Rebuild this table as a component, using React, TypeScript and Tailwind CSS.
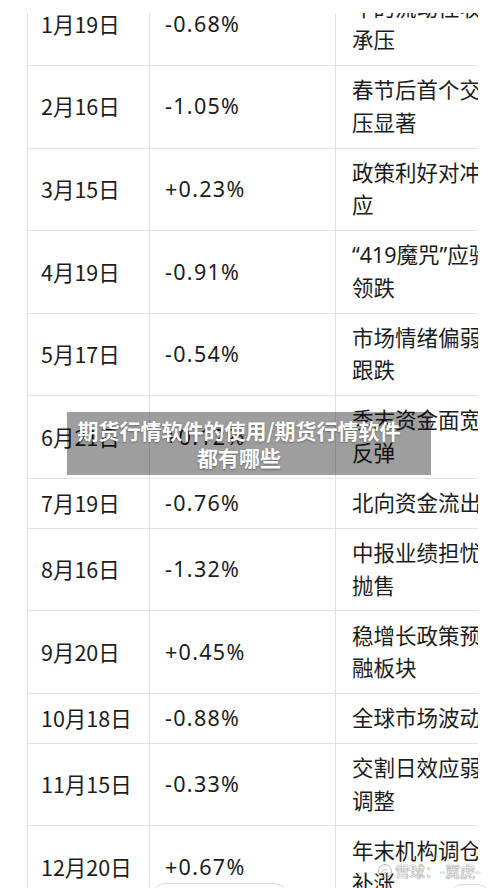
import React from "react";

type Row = { date: string; pct: string; lines: string[] };

const rows: Row[] = [
  { date: "1月19日", pct: "-0.68%", lines: ["年的流动性收紧", "承压"] },
  { date: "2月16日", pct: "-1.05%", lines: ["春节后首个交易日抛", "压显著"] },
  { date: "3月15日", pct: "+0.23%", lines: ["政策利好对冲外部效", "应"] },
  { date: "4月19日", pct: "-0.91%", lines: ["“419魔咒”应验，券商", "领跌"] },
  { date: "5月17日", pct: "-0.54%", lines: ["市场情绪偏弱，消费股", "跟跌"] },
  { date: "6月21日", pct: "+0.12%", lines: ["季末资金面宽松，超跌", "反弹"] },
  { date: "7月19日", pct: "-0.76%", lines: ["北向资金流出"] },
  { date: "8月16日", pct: "-1.32%", lines: ["中报业绩担忧引发", "抛售"] },
  { date: "9月20日", pct: "+0.45%", lines: ["稳增长政策预期提振金", "融板块"] },
  { date: "10月18日", pct: "-0.88%", lines: ["全球市场波动"] },
  { date: "11月15日", pct: "-0.33%", lines: ["交割日效应弱势", "调整"] },
  { date: "12月20日", pct: "+0.67%", lines: ["年末机构调仓，权重", "补涨"] },
];

export default function App() {
  return (
    <div className="relative w-[500px] h-[888px] overflow-hidden bg-white text-[#1c1c1c] font-['Noto_Sans_CJK_SC',sans-serif]">
      <div className="pt-[13px] pl-[27px]">
        <div className="w-[451px] h-[875px] overflow-hidden">
          <div className="-mt-[29.6px] w-[640px] border-l border-[#e2e2e2]">
            {rows.map((r) => (
              <div
                key={r.date}
                className="grid grid-cols-[122px_186px_1fr] border-b border-[#e2e2e2]"
              >
                <div className="flex items-center border-r border-[#e2e2e2] pl-[13px] py-[8.2px] text-[21.5px] leading-[32.6px] whitespace-nowrap">
                  {r.date}
                </div>
                <div className="flex items-center border-r border-[#e2e2e2] pl-[15px] py-[8.2px] text-[21.5px] leading-[32.6px] tracking-[1.3px] whitespace-nowrap font-['Noto_Sans','Noto_Sans_CJK_SC',sans-serif]">
                  {r.pct}
                </div>
                <div className="flex flex-col justify-center pl-[16px] py-[8.2px] text-[21.5px] leading-[32.6px] whitespace-nowrap font-['Noto_Sans','Noto_Sans_CJK_SC',sans-serif]">
                  {r.lines.map((l, i) => (
                    <div key={i}>{l}</div>
                  ))}
                </div>
              </div>
            ))}
          </div>
        </div>
      </div>

      {/* overlay title banner */}
      <div className="absolute left-[67px] top-[412px] w-[364px] h-[63px] bg-[rgba(0,0,0,0.38)] flex items-center justify-center pr-[20px]">
        <div className="text-center text-white font-bold text-[21px] leading-[27px] [text-shadow:0_1px_2px_rgba(0,0,0,0.35)] whitespace-nowrap">
          期货行情软件的使用/期货行情软件
          <br />
          都有哪些
        </div>
      </div>

      {/* watermark */}
      <div className="absolute left-[377px] top-[862px] flex items-center gap-[2px] text-[15px] leading-[18px] text-[#eeeeee] [text-shadow:0_0_1px_rgba(0,0,0,0.5),0_0_1px_rgba(0,0,0,0.4)]">
        <svg width="16" height="16" viewBox="0 0 16 16" className="opacity-70">
          <circle cx="8" cy="8" r="6.5" fill="none" stroke="#a0a0a0" strokeWidth="1" />
          <path d="M4.5 9.5c1-2.5 3-3.5 5-2.5M6 11c1.2-1.8 3-2.4 4.8-1.5" fill="none" stroke="#a0a0a0" strokeWidth="1" />
        </svg>
        <span>雪球：-翼虎-</span>
      </div>

      {/* faint bottom pills */}
      <div className="absolute left-[153px] top-[883px] w-[134px] h-[24px] rounded-full border border-[#dcdcdc] bg-white/60" />
      <div className="absolute left-[450px] top-[884px] w-[40px] h-[24px] rounded-full border border-[#dcdcdc] bg-white/60" />
    </div>
  );
}
